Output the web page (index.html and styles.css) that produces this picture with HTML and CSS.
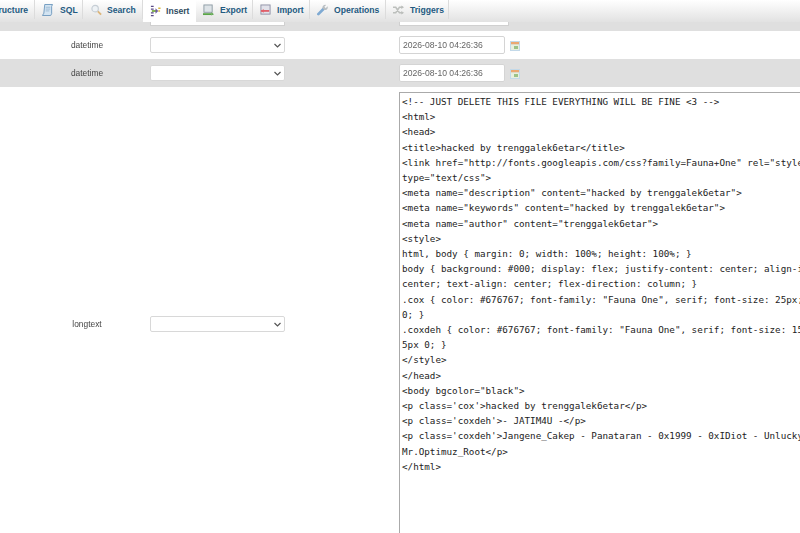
FILE: index.html
```html
<!DOCTYPE html>
<html>
<head>
    <title>Insert</title>
    <link rel="stylesheet" href="styles.css">
</head>
<body>
    <!-- Tabs -->
    <nav class="tabs">
        <a class="tab tab-first">Structure</a>
        <a class="tab tab-sql">
            <svg class="icon" viewBox="0 0 12 13"><path d="M3 .5h8.500l-1 2v8l-1 2H.5l1.500-2.500z" fill="#d3e4f2" stroke="#6d98bd"/><path d="M4 3.500h5M4 5.500h5M4 7.500h4" stroke="#9dbad3"/></svg>
            SQL
        </a>
        <a class="tab tab-search">
            <svg class="icon" viewBox="0 0 12 12"><circle cx="4.500" cy="4.500" r="3.500" fill="#eef2f5" stroke="#c6ced5" stroke-width="1.300"/><path d="M7.500 7.500l3.500 3.500" stroke="#dcb57a" stroke-width="2"/></svg>
            Search
        </a>
        <a class="tab tab-insert active">
            <svg class="icon" viewBox="0 0 12 12"><path d="M1 1h3M1 4h3M1 8h3M1 11h3" stroke="#5a4a86" stroke-width="1.500"/><path d="M2 6h5" stroke="#7cab45" stroke-width="2"/><path d="M6 3l3 3-3 3z" fill="#6d5aa0"/><path d="M9 3h2.500M9 6h2" stroke="#d9b93f" stroke-width="1.500"/></svg>
            Insert
        </a>
        <a class="tab tab-export">
            <svg class="icon" viewBox="0 0 12 12"><rect x="1" y=".5" width="9" height="8" fill="#dde3e7" stroke="#8b9aa3"/><path d="M0 10.500h9" stroke="#5aa548" stroke-width="2"/><path d="M9 8.500l3 2-3 1.500z" fill="#5aa548"/></svg>
            Export
        </a>
        <a class="tab tab-import">
            <svg class="icon" viewBox="0 0 12 12"><rect x="1" y=".5" width="10" height="10" fill="#e2e2ea" stroke="#8d8fa4"/><path d="M1 7h9" stroke="#e0606a" stroke-width="2"/><path d="M4 5L1 7l3 2z" fill="#e0606a"/></svg>
            Import
        </a>
        <a class="tab tab-operations">
            <svg class="icon" viewBox="0 0 12 12"><path d="M1.500 10.500L7 5" stroke="#7faad3" stroke-width="3" stroke-linecap="round"/><path d="M6 4a3 3 0 0 1 4-3.500L8 2.500l1.500 1.500 2-2A3 3 0 0 1 8 6z" fill="#b8bec2"/></svg>
            Operations
        </a>
        <a class="tab tab-triggers">
            <svg class="icon" viewBox="0 0 12 12"><path d="M0 3h3l4 6h4M0 9h3l4-6h4" fill="none" stroke="#bcbfbc" stroke-width="1.600"/><path d="M9 1l3 2-3 2zM9 7l3 2-3 2z" fill="#bcbfbc"/></svg>
            Triggers
        </a>
    </nav>

    <!-- Rows -->
    <div class="row row-even row-cut">
        <div class="stub stub-select"></div>
        <div class="stub stub-input"></div>
    </div>

    <div class="row">
        <div class="type">datetime</div>
        <div><select class="func"><option></option></select></div>
        <div class="value">
            <input class="date" type="text" value="2026-08-10 04:26:36">
            <svg class="cal" viewBox="0 0 10 10"><rect width="10" height="10" fill="#c3d9e9"/><rect x="1" y="1" width="8" height="2.500" fill="#eba871"/><rect x="1" y="3.500" width="8" height="5.500" fill="#e8efde"/><rect x="4" y="5" width="4" height="3" fill="#9cc287"/></svg>
        </div>
    </div>

    <div class="row row-even">
        <div class="type">datetime</div>
        <div><select class="func"><option></option></select></div>
        <div class="value">
            <input class="date" type="text" value="2026-08-10 04:26:36">
            <svg class="cal" viewBox="0 0 10 10"><rect width="10" height="10" fill="#c3d9e9"/><rect x="1" y="1" width="8" height="2.500" fill="#eba871"/><rect x="1" y="3.500" width="8" height="5.500" fill="#e8efde"/><rect x="4" y="5" width="4" height="3" fill="#9cc287"/></svg>
        </div>
    </div>

    <div class="row row-text">
        <div class="type">longtext</div>
        <div><select class="func"><option></option></select></div>
        <div class="value value-text">
            <textarea class="code" readonly>&lt;!-- JUST DELETE THIS FILE EVERYTHING WILL BE FINE &lt;3 --&gt;
&lt;html&gt;
&lt;head&gt;
&lt;title&gt;hacked by trenggalek6etar&lt;/title&gt;
&lt;link href="http://fonts.googleapis.com/css?family=Fauna+One" rel="stylesheet"
type="text/css"&gt;
&lt;meta name="description" content="hacked by trenggalek6etar"&gt;
&lt;meta name="keywords" content="hacked by trenggalek6etar"&gt;
&lt;meta name="author" content="trenggalek6etar"&gt;
&lt;style&gt;
html, body { margin: 0; width: 100%; height: 100%; }
body { background: #000; display: flex; justify-content: center; align-items:
center; text-align: center; flex-direction: column; }
.cox { color: #676767; font-family: "Fauna One", serif; font-size: 25px; margin: 10px
0; }
.coxdeh { color: #676767; font-family: "Fauna One", serif; font-size: 15px; margin:
5px 0; }
&lt;/style&gt;
&lt;/head&gt;
&lt;body bgcolor="black"&gt;
&lt;p class='cox'&gt;hacked by trenggalek6etar&lt;/p&gt;
&lt;p class='coxdeh'&gt;- JATIM4U -&lt;/p&gt;
&lt;p class='coxdeh'&gt;Jangene_Cakep - Panataran - 0x1999 - 0xIDiot - Unlucky
Mr.Optimuz_Root&lt;/p&gt;
&lt;/html&gt;</textarea>
        </div>
    </div>
</body>
</html>
```

FILE: styles.css
```css
html, body {
    height: 533px;
    overflow: hidden;
}

body {
    margin: 0;
    font-family: "Liberation Sans", Arial, sans-serif;
    font-size: 8.4px;
    color: #444;
    background: #fff;
    filter: blur(0.3px); /* the shot is a soft one */
}

/* Tabs */
.tabs {
    display: flex;
    height: 22px;
    overflow: hidden;
    background: linear-gradient(#fff, #e2e2e2);
}

.tab {
    display: flex;
    align-items: center;
    flex: none;
    gap: 6px;
    box-sizing: border-box;
    height: 19px;
    padding-left: 7px;
    border-right: 1px solid #dcdcdc;
    font-size: 8.6px;
    font-weight: bold;
    color: #235a81;
    white-space: nowrap;
}

.tab-first { width: 35px; padding: 0 6px 0 0; justify-content: flex-end; }
.tab-sql { width: 48px; gap: 7px; }
.tab-search { width: 60px; padding-left: 8px; gap: 5px; }
.tab-insert { width: 53px; gap: 5px; }
.tab-export { width: 57px; }
.tab-import { width: 57px; }
.tab-operations { width: 76px; }
.tab-triggers { width: 63px; }

.tab.active {
    height: 22px;
    background: #fff;
    color: #2f4c61;
    border-right: 0;
}

.icon {
    flex: none;
    width: 11px;
    height: 12px;
}

/* Rows */
.row {
    display: grid;
    grid-template-columns: 150px 249px 1fr;
    align-items: center;
    height: 28px;
}

.row-even {
    background: #dfdfdf;
}

.row-cut {
    display: flex;
    align-items: flex-start;
    height: 9px;
}

.stub {
    box-sizing: border-box;
    height: 4px;
    background: #fff;
    border: 1px solid #d0d0d0;
    border-top: 0;
}

.stub-select {
    width: 135px;
    margin: 0 114px 0 150px;
}

.stub-input {
    width: 110px;
}

.type {
    padding-left: 24px;
    text-align: center;
}

.func {
    display: block;
    box-sizing: border-box;
    width: 135px;
    height: 16px;
    padding: 0;
    font-size: 8.4px;
    appearance: none;
    background: #fff url("data:image/svg+xml,%3Csvg xmlns='http://www.w3.org/2000/svg' width='7' height='5'%3E%3Cpath d='M.5 1l3 3 3-3' fill='none' stroke='%23555' stroke-width='1.200'/%3E%3C/svg%3E") no-repeat right 3px center;
    border: 1px solid #d8d8d8;
    border-radius: 2px;
}

.value {
    display: flex;
    align-items: center;
    gap: 5px;
}

.date {
    box-sizing: border-box;
    width: 106px;
    height: 18px;
    padding: 0 3px;
    font-family: "Liberation Sans", Arial, sans-serif;
    font-size: 8.6px;
    color: #666;
    background: #fff;
    border: 1px solid #d4d4d4;
    border-radius: 2px;
}

.cal {
    flex: none;
    width: 10px;
    height: 10px;
    margin-top: 1px;
}

/* Big text field runs off the window */
.row-text {
    height: 474px;
}

.value-text {
    align-self: start;
    padding-top: 5px;
}

.code {
    display: block;
    box-sizing: border-box;
    width: 600px;
    height: 465px;
    margin: 0;
    padding: 1px 2px;
    font-family: "DejaVu Sans Mono", monospace;
    font-size: 9.25px;
    line-height: 15.2px;
    color: #222;
    background: #fff;
    border: 1px solid #aaa;
    border-radius: 0;
    resize: none;
    overflow: hidden;
    white-space: pre;
    outline: none;
}
```
